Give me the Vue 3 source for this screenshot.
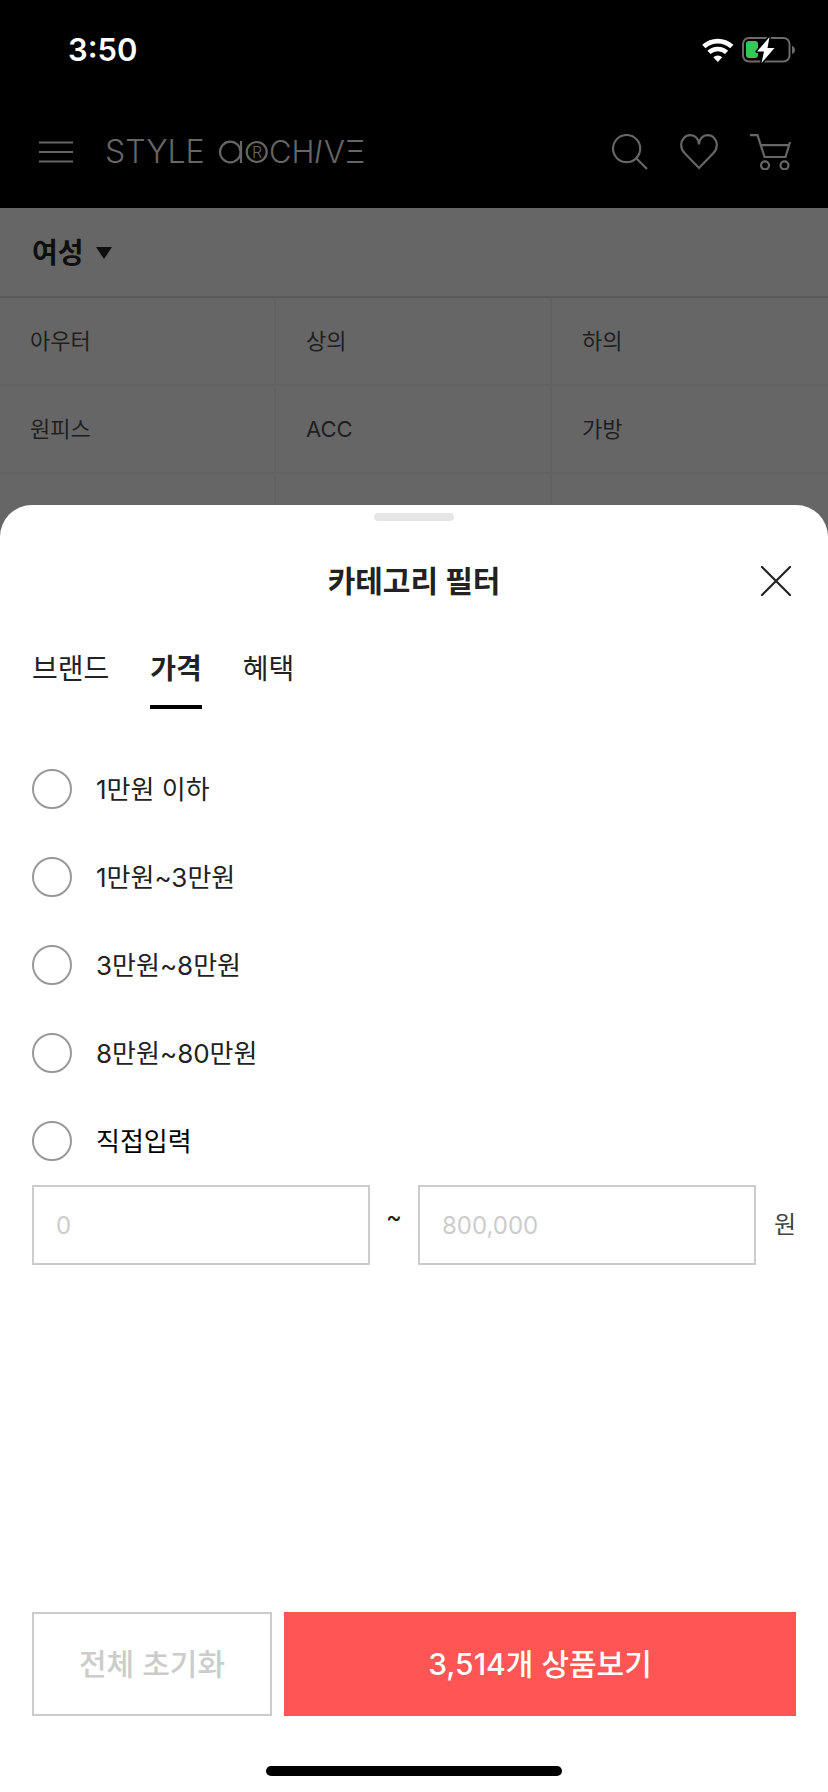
<script setup>
import { ref } from 'vue'

const categories = ['아우터', '상의', '하의', '원피스', 'ACC', '가방', '', '', '']
const tabs = ['브랜드', '가격', '혜택']
const activeTab = ref('가격')
const ranges = ['1만원 이하', '1만원~3만원', '3만원~8만원', '8만원~80만원', '직접입력']
const selectedRange = ref('')
const minPrice = ref('')
const maxPrice = ref('')

function reset() {
  selectedRange.value = ''
  minPrice.value = ''
  maxPrice.value = ''
}
</script>

<template>
  <div class="screen">
    <div class="status">
      <span class="time">3:50</span>
      <div class="status-icons">
        <svg width="32" height="26" viewBox="0 0 32 26" fill="none" stroke="#fff" aria-hidden="true">
          <path d="M1.8 9.6A20.7 20.7 0 0 1 29.8 9.6" stroke-width="4.8" />
          <path d="M7 15.4A13 13 0 0 1 24.6 15.4" stroke-width="4.6" />
          <path d="M15.8 25L11.3 20.3A6.5 6.5 0 0 1 20.3 20.3Z" fill="#fff" stroke="none" />
        </svg>
        <svg width="54" height="28" viewBox="0 0 54 28" fill="none" aria-hidden="true">
          <rect x="1" y="2" width="46.500" height="23.500" rx="6" stroke="#6b6b6b" stroke-width="2" />
          <path d="M50 10v8c2-.6 3-2.200 3-4s-1-3.400-3-4Z" fill="#6b6b6b" />
          <rect x="4" y="5" width="12" height="17" rx="3" fill="#34c759" />
          <path
            d="M27.500 1L15 15.500H22L19.500 27L32.500 12H25.500Z"
            fill="#fff"
            stroke="#000"
            stroke-width="3"
            stroke-linejoin="round"
            paint-order="stroke"
          />
        </svg>
      </div>
    </div>

    <header class="topbar">
      <button class="icon-btn" type="button" aria-label="메뉴">
        <svg width="34" height="22" viewBox="0 0 34 22" stroke="#666" stroke-width="2.200">
          <path d="M0 1.500H34M0 11H34M0 20.500H34" />
        </svg>
      </button>
      <a class="logo" href="#" aria-label="STYLE ARCHIVE">
        <svg width="270" height="48" viewBox="0 0 270 48" class="logo-art">
          <text x="0" y="35" font-size="32">STYLE</text>
          <g fill="none" stroke="#666" stroke-width="2.200">
            <circle cx="125.300" cy="24" r="10.300" />
            <path d="M136 13V35" />
            <circle cx="151.700" cy="24" r="10" />
          </g>
          <text x="147" y="30" font-size="16">R</text>
          <text x="164" y="35" font-size="31">CH</text>
          <text x="209" y="35" font-size="31" font-style="italic">I</text>
          <text x="219" y="35" font-size="31">V</text>
          <text x="240" y="35" font-size="31">Ξ</text>
        </svg>
      </a>
      <nav class="actions">
        <button class="icon-btn" type="button" aria-label="검색">
          <svg width="36" height="36" viewBox="0 0 36 36" fill="none" stroke="#666" stroke-width="2.200">
            <circle cx="14.600" cy="14.600" r="13.600" />
            <path d="M24.500 24.500L35 35" />
          </svg>
        </button>
        <button class="icon-btn" type="button" aria-label="찜">
          <svg width="38" height="36" viewBox="0 0 38 36" fill="none" stroke="#666" stroke-width="2.200">
            <path d="M19 10.500C19 5 15 1.200 10.500 1.200C5.200 1.200 1.200 5.500 1.200 11C1.200 14.500 2.500 17 4.500 19L19 34L33.500 19C35.500 17 36.800 14.500 36.800 11C36.800 5.500 32.800 1.200 27.500 1.200C23 1.200 19 5 19 10.500Z" />
          </svg>
        </button>
        <button class="icon-btn" type="button" aria-label="장바구니">
          <svg width="42" height="36" viewBox="0 0 42 36" fill="none" stroke="#666" stroke-width="2.200">
            <path d="M0 1.200H7.500L14.500 23H35.500L40 8M10.600 11.200H39" />
            <circle cx="15" cy="31.300" r="4" />
            <circle cx="34.500" cy="31.300" r="4" />
          </svg>
        </button>
      </nav>
    </header>

    <main class="page">
      <button class="gender" type="button">
        여성
        <svg width="16" height="12" viewBox="0 0 16 12" aria-hidden="true"><path d="M0 0H16L8 12Z" fill="#0f0f0f" /></svg>
      </button>
      <div class="categories">
        <div v-for="(name, i) in categories" :key="i" class="category">
          <a v-if="name" href="#">{{ name }}</a>
        </div>
      </div>
    </main>

    <section class="sheet" role="dialog" aria-labelledby="sheet-title">
      <div class="grabber"></div>
      <div class="sheet-head">
        <h2 id="sheet-title">카테고리 필터</h2>
        <button class="icon-btn close" type="button" aria-label="닫기">
          <svg width="32" height="32" viewBox="0 0 32 32" stroke="#222" stroke-width="2.200" stroke-linecap="round">
            <path d="M2 2L30 30M30 2L2 30" />
          </svg>
        </button>
      </div>

      <div class="tabs" role="tablist">
        <button
          v-for="tab in tabs"
          :key="tab"
          type="button"
          role="tab"
          class="tab"
          :class="{ active: tab === activeTab }"
          :aria-selected="tab === activeTab"
          @click="activeTab = tab"
        >
          {{ tab }}
        </button>
      </div>

      <div class="options">
        <label v-for="range in ranges" :key="range" class="option">
          <input v-model="selectedRange" type="radio" name="price" :value="range" />
          <span>{{ range }}</span>
        </label>
      </div>

      <div class="custom">
        <input v-model="minPrice" type="text" inputmode="numeric" placeholder="0" aria-label="최소 금액" />
        <span class="tilde">~</span>
        <input v-model="maxPrice" type="text" inputmode="numeric" placeholder="800,000" aria-label="최대 금액" />
        <span class="unit">원</span>
      </div>

      <div class="footer">
        <button class="reset" type="button" @click="reset">전체 초기화</button>
        <button class="submit" type="button">3,514개 상품보기</button>
      </div>
      <div class="home-bar"></div>
    </section>
  </div>
</template>

<style>
body {
  background: #fff;
}
</style>

<style scoped>
.screen,
.screen * {
  box-sizing: border-box;
}

.screen {
  display: flex;
  flex-direction: column;
  min-height: 100vh;
  background: #666;
  color: #222;
  font-family: Inter, "Noto Sans CJK KR", sans-serif;
  line-height: 1.5;
}

button,
input {
  margin: 0;
  padding: 0;
  border: 0;
  border-radius: 0;
  background: none;
  color: inherit;
  font: inherit;
}

a {
  color: inherit;
  text-decoration: none;
}

svg {
  display: block;
}

.status {
  display: flex;
  align-items: center;
  justify-content: space-between;
  height: 100px;
  padding: 0 32px 0 68px;
  background: #000;
  color: #fff;
}

.time {
  font-size: 31px;
  font-weight: 600;
}

.status-icons {
  display: flex;
  align-items: center;
  gap: 8px;
}

.topbar {
  display: flex;
  align-items: center;
  height: 108px;
  padding: 0 36px 4px 39px;
  background: #000;
}

.logo {
  margin-left: 32px;
}

.logo-art {
  fill: #666;
  font-family: Inter, sans-serif;
  font-weight: 300;
}

.actions {
  display: flex;
  gap: 32px;
  margin-left: auto;
}

.gender {
  display: flex;
  align-items: center;
  gap: 12px;
  width: 100%;
  height: 90px;
  padding: 2px 32px 0;
  border-bottom: 2px solid #5a5a5a;
  color: #0f0f0f;
  font-size: 28px;
  font-weight: 700;
}

.categories {
  display: grid;
  grid-template-columns: repeat(3, 1fr);
}

.category {
  display: flex;
  align-items: center;
  height: 88px;
  padding-left: 30px;
  border-right: 2px solid #626262;
  border-bottom: 2px solid #626262;
  color: #1f1f1f;
  font-size: 22px;
}

.category:nth-child(3n) {
  border-right: 0;
}

.sheet {
  display: flex;
  flex: 1;
  flex-direction: column;
  margin-top: -57px;
  padding: 8px 32px 16px;
  border-radius: 32px 32px 0 0;
  background: #fff;
}

.grabber {
  align-self: center;
  width: 80px;
  height: 8px;
  border-radius: 4px;
  background: #e5e5e5;
}

.sheet-head {
  display: grid;
  grid-template-columns: 40px 1fr 40px;
  align-items: center;
  height: 120px;
}

.sheet-head h2 {
  grid-column: 2;
  margin: 0;
  font-size: 30px;
  font-weight: 700;
  text-align: center;
}

.close {
  justify-self: center;
}

.tabs {
  display: flex;
  gap: 41px;
  margin: 8px 0 36px;
}

.tab {
  padding-bottom: 16px;
  border-bottom: 4px solid transparent;
  font-size: 28px;
  line-height: 40px;
}

.tab.active {
  border-color: #000;
  font-weight: 700;
}

.option {
  display: flex;
  align-items: center;
  gap: 24px;
  height: 88px;
  font-size: 26px;
}

.option:last-child {
  color: #000;
}

.option input {
  width: 40px;
  height: 40px;
  border: 2px solid #999;
  border-radius: 50%;
  appearance: none;
}

.option input:checked {
  border: 12px solid #ff5555;
}

.custom {
  display: flex;
  align-items: center;
  font-size: 24px;
}

.custom input {
  flex: 1;
  min-width: 0;
  height: 80px;
  padding: 0 22px;
  border: 2px solid #ccc;
}

.custom input::placeholder {
  color: #ccc;
  opacity: 1;
}

.tilde {
  width: 48px;
  padding-bottom: 16px;
  text-align: center;
}

.unit {
  width: 40px;
  color: #444;
  text-align: right;
}

.footer {
  display: flex;
  gap: 12px;
  margin-top: auto;
  padding-top: 40px;
  font-size: 30px;
  font-weight: 500;
}

.footer button {
  height: 104px;
}

.reset {
  flex: 0 0 240px;
  border: 2px solid #ccc;
  color: #ccc;
}

.submit {
  flex: 1;
  background: #ff5555;
  color: #fff;
}

.home-bar {
  align-self: center;
  width: 296px;
  height: 10px;
  margin-top: 50px;
  border-radius: 5px;
  background: #000;
}
</style>
